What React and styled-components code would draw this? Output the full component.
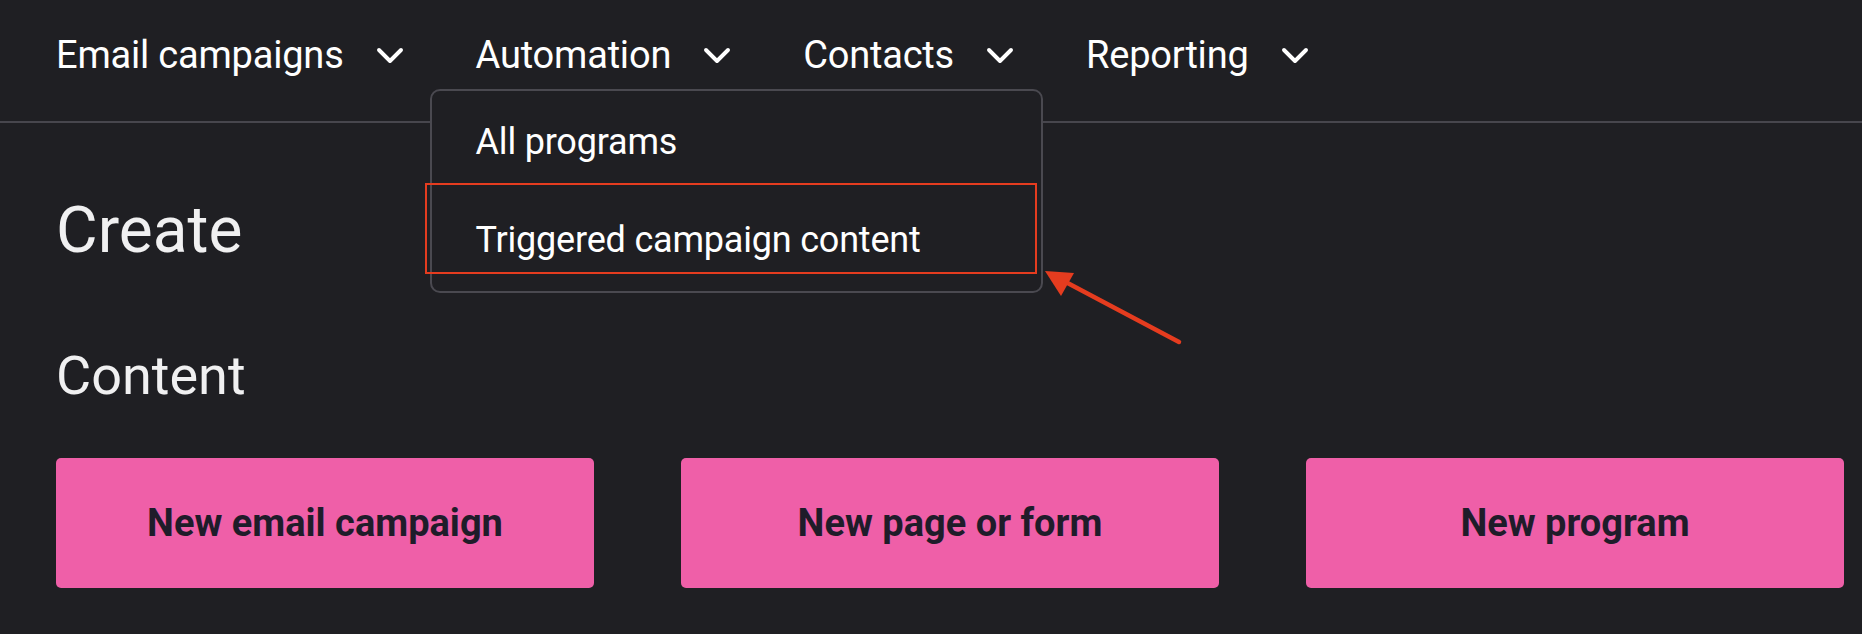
import React from 'react';
import styled, { createGlobalStyle } from 'styled-components';

const GlobalStyle = createGlobalStyle`
  html, body {
    margin: 0;
    padding: 0;
    background: #1f1f23;
  }
  body {
    font-family: Roboto, "Liberation Sans", sans-serif;
    color: #f2f2f3;
  }
`;

const navItems = ['Email campaigns', 'Automation', 'Contacts', 'Reporting'];
const menuItems = ['All programs', 'Triggered campaign content'];
const actions = ['New email campaign', 'New page or form', 'New program'];

const Chevron = () => (
  <svg width='28' height='18' viewBox='0 0 28 18' fill='none'>
    <polyline
      points='3,3 14,14 25,3'
      stroke='#ffffff'
      strokeWidth='3.9'
      strokeLinecap='round'
      strokeLinejoin='round'
    />
  </svg>
);

const App = () => {
  return (
    <Page>
      <GlobalStyle />
      <TopNav>
        {navItems.map((item) => (
          <NavItem key={item}>
            <span>{item}</span>
            <Chevron />
            {item === 'Automation' && (
              <Menu>
                {menuItems.map((m) => (
                  <MenuItem key={m}>{m}</MenuItem>
                ))}
              </Menu>
            )}
          </NavItem>
        ))}
      </TopNav>

      <Main>
        <Title>Create</Title>
        <SubTitle>Content</SubTitle>
        <Actions>
          {actions.map((a) => (
            <ActionButton key={a}>{a}</ActionButton>
          ))}
        </Actions>
      </Main>

      <Highlight />
      <Arrow width='170' height='100' viewBox='0 0 170 100'>
        <line x1='149' y1='82' x2='30' y2='19' stroke='#e53c1f' strokeWidth='4.5' strokeLinecap='round' />
        <polygon points='15,11 44,13 31,36' fill='#e53c1f' />
      </Arrow>
    </Page>
  );
};

const Page = styled.div`
  position: relative;
  width: 1862px;
  height: 634px;
  overflow: hidden;
  background: #1f1f23;
`;

const TopNav = styled.nav`
  display: flex;
  align-items: center;
  gap: 72px;
  height: 110px;
  padding: 0 0 11px 56px;
  border-bottom: 2px solid #47464d;
  box-sizing: content-box;
`;

const NavItem = styled.div`
  position: relative;
  display: flex;
  align-items: center;
  gap: 32px;
  font-size: 38px;
  color: #ffffff;
  letter-spacing: -0.2px;
  svg {
    margin-top: 2px;
  }
`;

const Menu = styled.div`
  position: absolute;
  top: 56px;
  left: -46px;
  width: 609px;
  padding: 2px 0;
  background: #1f1f23;
  border: 2px solid #4a4950;
  border-radius: 10px;
  z-index: 2;
`;

const MenuItem = styled.div`
  display: flex;
  align-items: center;
  height: 98px;
  padding-left: 44px;
  font-size: 36px;
  color: #ffffff;
`;

const Main = styled.main`
  padding: 68px 0 0 56px;
`;

const Title = styled.h1`
  margin: 0;
  font-size: 64px;
  font-weight: 400;
  line-height: 79px;
  color: #f0f0f1;
`;

const SubTitle = styled.h2`
  margin: 73px 0 0;
  font-size: 54px;
  font-weight: 400;
  line-height: 66px;
  color: #f0f0f1;
`;

const Actions = styled.div`
  display: flex;
  gap: 87px;
  margin-top: 49px;
`;

const ActionButton = styled.button`
  width: 538px;
  height: 130px;
  border: none;
  border-radius: 5px;
  background: #ef5fa8;
  color: #1f1c2a;
  font-family: Roboto, "Liberation Sans", sans-serif;
  font-size: 38px;
  font-weight: 700;
  cursor: pointer;
`;

const Highlight = styled.div`
  position: absolute;
  left: 425px;
  top: 183px;
  width: 608px;
  height: 87px;
  border: 2px solid #e53c1f;
  z-index: 3;
`;

const Arrow = styled.svg`
  position: absolute;
  left: 1030px;
  top: 260px;
  z-index: 3;
`;

export default App;
